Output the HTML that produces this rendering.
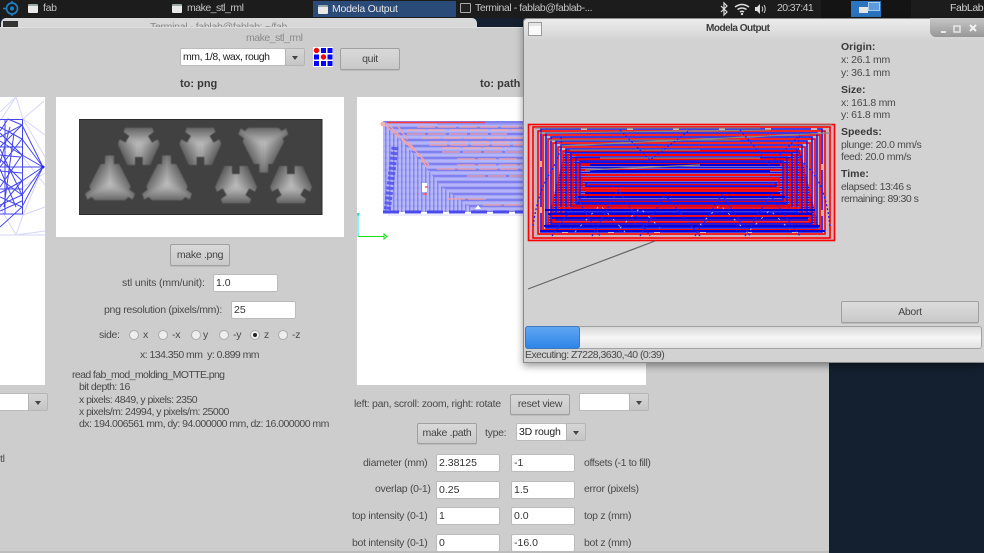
<!DOCTYPE html>
<html><head><meta charset="utf-8"><style>
*{box-sizing:border-box}
html,body{margin:0;padding:0;width:984px;height:553px;overflow:hidden;background:#14202f}
body{font-family:"Liberation Sans",sans-serif;font-size:10.5px;color:#4a4a4a;position:relative}
.a{position:absolute;white-space:pre;line-height:12px;letter-spacing:-.3px}
.t{letter-spacing:-.54px}
.box{position:absolute}
.btn{position:absolute;border:1px solid #a0a0a0;border-radius:2px;background:linear-gradient(#d9d9d9,#c9c9c9);text-align:center;color:#444;font-size:10.5px;letter-spacing:-.3px;box-shadow:0 1px 0 #bbb}
.inp{position:absolute;background:#fff;border:1px solid #bbb;border-radius:2px;padding-left:2px;color:#333;font-size:10.5px;line-height:16px;height:18px;width:64px}
.arr{position:absolute;background:linear-gradient(#d6d6d6,#c6c6c6);border:1px solid #b5b5b5;border-radius:0 2px 2px 0;height:18px;width:20px}
.arr:after{content:"";position:absolute;left:6px;top:7px;border:3.5px solid transparent;border-top:4px solid #444;border-bottom:0}
.rad{position:absolute;width:10px;height:10px;border-radius:50%;background:#eee;border:1px solid #aaa;top:330px}
.top{color:#c4c4c4;font-size:10.5px}
.b{font-weight:bold;color:#3a3a3a}
.wi{position:absolute;width:10px;height:9px;background:#e8e8e8;border-top:2px solid #9aa;border-radius:1px}
</style></head><body>
<!-- top bar -->
<div class="box" style="left:0;top:0;width:984px;height:18px;background:#1c1c1c"></div>
<svg class="box" style="left:2px;top:0" width="18" height="18"><circle cx="10" cy="8.500" r="5.500" fill="none" stroke="#1f7fc4" stroke-width="1.700"/><circle cx="10" cy="8.500" r="2" fill="#1f7fc4"/><path d="M1 8.500h3M10 1v2M10 14v2" stroke="#1f7fc4" stroke-width="1.500"/></svg>
<div class="wi" style="left:28px;top:4px"></div><div class="a top" style="left:43px;top:2px">fab</div>
<div class="wi" style="left:172px;top:4px"></div><div class="a top" style="left:187px;top:2px;letter-spacing:-.5px">make_stl_rml</div>
<div class="box" style="left:313px;top:1px;width:143px;height:16px;background:#2a4a78"></div>
<div class="wi" style="left:318px;top:5px"></div><div class="a" style="left:332px;top:3px;color:#e6e6e6;letter-spacing:-.25px">Modela Output</div>
<div class="box" style="left:460px;top:3px;width:11px;height:10px;background:#222;border:1px solid #aaa;border-radius:1px"></div>
<div class="a top" style="left:475px;top:2px;letter-spacing:-.43px">Terminal - fablab@fablab-...</div>
<svg class="box" style="left:719px;top:1px" width="60" height="16"><path d="M2 5l6 6-3 3V2l3 3-6 6" fill="none" stroke="#ddd" stroke-width="1.200"/><path d="M16 6q7-5 14 0M18.500 8.500q4.500-3 9 0M21 11q2-1.500 4 0" fill="none" stroke="#ddd" stroke-width="1.500"/><circle cx="23" cy="13" r="1.200" fill="#ddd"/><path d="M36 6h2l3-3v10l-3-3h-2z" fill="#ddd"/><path d="M43 5.500q1.500 2.500 0 5M45 4q2.500 4 0 8" fill="none" stroke="#ccc"/></svg>
<div class="a" style="left:777px;top:2px;color:#c8c8c8;letter-spacing:-.6px">20:37:41</div>
<div class="box" style="left:821px;top:0;width:90px;height:18px;background:#141414"></div>
<div class="box" style="left:851px;top:1px;width:30px;height:16px;background:#2b74c0"></div>
<div class="box" style="left:859px;top:7px;width:9px;height:6px;background:#e5e5e5"></div>
<div class="box" style="left:868px;top:2px;width:12px;height:9px;background:#5c9bdc;border:1px solid #a8c8ec"></div>
<div class="a top" style="left:950px;top:2px;color:#cfcfcf;letter-spacing:-.4px">FabLab</div>

<!-- behind window sliver -->
<div class="box" style="left:1px;top:18px;width:476px;height:12px;border-radius:5px 5px 0 0;background:#d8d8d8"></div>
<div class="box" style="left:3px;top:21px;width:15px;height:8px;background:#333"></div>
<div class="a" style="left:150px;top:21px;height:6px;overflow:hidden;color:#888">Terminal - fablab@fablab: ~/fab</div>

<!-- make_stl_rml window -->
<div class="box" style="left:0;top:27px;width:829px;height:526px;background:#cdcdcd;border-top:1px solid #e0e0e0"></div>
<div class="box" style="left:0;top:551px;width:829px;height:2px;background:#bcbcbc"></div>
<div class="a" style="left:246px;top:32px;color:#8a8a8a;letter-spacing:-.5px">make_stl_rml</div>

<div class="inp" style="left:180px;top:48px;width:106px;color:#222;line-height:17px;letter-spacing:-.45px">mm, 1/8, wax, rough</div><div class="arr" style="left:285px;top:48px"></div>
<svg class="box" style="left:313px;top:47px" width="20" height="20"><rect width="20" height="20" fill="#fff"/><g fill="#00f"><rect x="8" y="1" width="5" height="5"/><rect x="14.500" y="1" width="5" height="5"/><rect x="1" y="7.500" width="5" height="5"/><rect x="14.500" y="7.500" width="5" height="5"/><rect x="1" y="14" width="5" height="5"/><rect x="8" y="14" width="5" height="5"/><rect x="14.500" y="14" width="5" height="5"/></g><circle cx="3.500" cy="3.500" r="2.700" fill="#f00"/><circle cx="10.500" cy="10" r="2.700" fill="#f00"/></svg>
<div class="btn" style="left:340px;top:48px;width:60px;height:22px;line-height:20px">quit</div>
<div class="a b" style="left:180px;top:78px;font-size:11px;letter-spacing:0">to: png</div>
<div class="a b" style="left:480px;top:78px;font-size:11px;letter-spacing:0">to: path</div>

<!-- left mesh canvas -->
<svg class="box" style="left:0;top:97px" width="45" height="288"><rect width="45" height="288" fill="#fff"/>
<g stroke="#d5d5fb" stroke-width="1" fill="none"><path d="M0 24L16 0L23 22L44 4M23 22L45 38M23 22L45 60M43 70L23 118L16 138L0 110M23 118L45 110M16 138L45 134M23 60L45 88M23 90L45 76M16 0L0 15M0 138H45"/></g>
<g stroke="#4545f2" stroke-width="1" fill="none"><path d="M0 22.500H22.500V117H0"/><path d="M43 70L22 28L0 40M43 70L22 42L0 70M43 70L22 58L0 90M43 70H0M43 70L22 84L0 62M43 70L22 98L0 52M43 70L22 110L0 130M22 28L8 22L0 34M22 42L0 30M22 58L0 44M22 84L0 96M22 98L0 82M22 110L0 100M5 22V117M22 28L0 50M22 58L0 36M22 84L0 110M22 98L0 108M14 36L4 110M22 50H0M22 76L0 74M22 92L0 92M22 104L0 114M10 30L0 66M16 110L0 72M20 60L0 58"/></g><circle cx="43" cy="70" r="1.500" fill="#22f"/></svg>
<!-- left combo -->
<div class="inp" style="left:-30px;top:393px;height:18px;width:60px"></div><div class="arr" style="left:28px;top:393px"></div>
<div class="a" style="left:0;top:453px">tl</div>

<!-- png preview -->
<div class="box" style="left:56px;top:97px;width:288px;height:140px;background:#fff"></div>
<svg class="box" style="left:79px;top:119px" width="244" height="96" viewBox="79 119 244 96"><defs>
<filter id="sf" x="-5%" y="-5%" width="110%" height="110%"><feGaussianBlur stdDeviation=".45"/></filter>
<linearGradient id="g1" gradientUnits="userSpaceOnUse" x1="0" y1="-55" x2="0" y2="-5"><stop offset="0" stop-color="#636363"/><stop offset="1" stop-color="#c0c0c0"/></linearGradient>
<linearGradient id="g2" gradientUnits="userSpaceOnUse" x1="52" y1="25" x2="0" y2="-5"><stop offset="0" stop-color="#5c5c5c"/><stop offset="1" stop-color="#c0c0c0"/></linearGradient>
<linearGradient id="g3" gradientUnits="userSpaceOnUse" x1="-52" y1="25" x2="0" y2="-5"><stop offset="0" stop-color="#5c5c5c"/><stop offset="1" stop-color="#c0c0c0"/></linearGradient>
<clipPath id="ca"><path d="M-41-55H41L45-42L28-30L40-10L57-20L63-6L35 57H12V33H-11V57H-35L-63-6L-57-20L-40-10L-28-30L-45-42Z"/></clipPath>
<clipPath id="cb"><path d="M-45-52H45L55-42L68-50L75-32L58-20L62-10L28 57H15V83H-12V57H-28L-62-10L-58-20L-75-32L-68-50L-55-42Z"/></clipPath>
<g id="sec"><path d="M0-5L-100-62V-90H100V-62Z" fill="url(#g1)"/><path d="M0-5L100-62V100H0Z" fill="url(#g2)"/><path d="M0-5L-100-62V100H0Z" fill="url(#g3)"/></g>
<g id="A" clip-path="url(#ca)"><use href="#sec"/></g>
<g id="B" clip-path="url(#cb)"><use href="#sec"/></g>
</defs>
<rect x="79" y="119.500" width="243" height="95" fill="#414141" stroke="#2c2c2c"/>
<g filter="url(#sf)">
<use href="#A" transform="translate(138.700,146) scale(.333)"/>
<use href="#A" transform="translate(200.300,146) scale(.333)"/>
<use href="#B" transform="translate(263.300,145) scale(.333)"/>
<use href="#B" transform="translate(110,183) rotate(180) scale(.333)"/>
<use href="#B" transform="translate(167,183) rotate(180) scale(.333)"/>
<use href="#A" transform="translate(236,185) rotate(180) scale(.333)"/>
<use href="#A" transform="translate(291,185) rotate(180) scale(.333)"/>
</g>
</svg>
<div class="btn" style="left:170px;top:244px;width:60px;height:22px;line-height:20px">make .png</div>
<div class="a" style="left:122px;top:277px;letter-spacing:-.15px">stl units (mm/unit):</div><div class="inp" style="left:213px;top:274px;width:65px">1.0</div>
<div class="a" style="left:104px;top:304px">png resolution (pixels/mm):</div><div class="inp" style="left:231px;top:301px;width:65px">25</div>
<div class="a" style="left:99px;top:329px">side:</div>
<div class="rad" style="left:129px"></div><div class="a" style="left:143px;top:329px">x</div>
<div class="rad" style="left:158px"></div><div class="a" style="left:172px;top:329px">-x</div>
<div class="rad" style="left:191px"></div><div class="a" style="left:203px;top:329px">y</div>
<div class="rad" style="left:219px"></div><div class="a" style="left:233px;top:329px">-y</div>
<div class="rad" style="left:250px"></div><div class="box" style="left:253px;top:333px;width:4px;height:4px;border-radius:50%;background:#222"></div><div class="a" style="left:264px;top:329px">z</div>
<div class="rad" style="left:278px"></div><div class="a" style="left:292px;top:329px">-z</div>
<div class="a t" style="left:140px;top:349px">x: 134.350 mm  y: 0.899 mm</div>
<div class="a t" style="left:72px;top:369px;letter-spacing:-.6px">read fab_mod_molding_MOTTE.png</div>
<div class="a t" style="left:79px;top:381px">bit depth: 16</div>
<div class="a t" style="left:79px;top:393.500px">x pixels: 4849, y pixels: 2350</div>
<div class="a t" style="left:79px;top:405.500px">x pixels/m: 24994, y pixels/m: 25000</div>
<div class="a t" style="left:79px;top:418px">dx: 194.006561 mm, dy: 94.000000 mm, dz: 16.000000 mm</div>

<!-- path canvas -->
<div class="box" style="left:357px;top:97px;width:289px;height:288px;background:#fff"></div>
<svg class="box" style="left:357px;top:97px" width="170" height="150">
<defs><pattern id="st" width="12" height="6" patternUnits="userSpaceOnUse"><rect width="12" height="6" fill="#a4a4f5"/><rect y="0" width="12" height="2" fill="#8080f0"/><rect y="3.500" width="12" height="1" fill="#c5c5fa"/></pattern>
<pattern id="vs" width="4" height="6" patternUnits="userSpaceOnUse"><rect width="4" height="6" fill="#b9b9f8"/><rect width="1.500" height="6" fill="#8080ee"/></pattern></defs>
<path d="M26 24H170V115H26Z" fill="url(#st)"/>
<path d="M26 25L65 66L85 90L120 115H26Z" fill="url(#vs)" opacity=".85"/>
<path d="M38 50L30 115" stroke="#5050ee" stroke-width="7" stroke-dasharray="3 2" fill="none" opacity=".85"/>
<path d="M26 115H170" stroke="#4a4aee" stroke-width="3" stroke-dasharray="16 6"/>
<g stroke="#f4a2a2" fill="none" stroke-width="1.300"><path d="M28 28L65 60M30 26L72 68M40 28L70 70M60 30H170M50 33H170M65 41H170M50 37H150M72 45H170M72 48H170M85 55H170M85 51H150M100 62H160M80 72H170M110 79H170M90 102H130M126 108H170M100 68H170" stroke-dasharray="18 3"/></g>
<path d="M30 25.500H128" stroke="#ff3a3a" stroke-width="1.500"/><path d="M80 27H170" stroke="#9090f2" stroke-width="1.500"/>
<path d="M31 118H170" stroke="#d8d8fa"/>
<path d="M118 112l3-4 3 4zM65 86h5v9h-5z" fill="#fff"/><path d="M66 97h4M68 90h3" stroke="#f55" stroke-width="1.500"/>
<circle cx="26" cy="27" r="2.500" fill="#f4b0b0"/>
<path d="M1 118V139.500" stroke="#19e6e6"/><path d="M1 139.500H27" stroke="#18e018"/><path d="M27 137v5l3-2.500z" fill="none" stroke="#18e018"/><rect x="0" y="116" width="2.500" height="2.500" fill="#19e6e6"/>
</svg>
<div class="a" style="left:354px;top:398px">left: pan, scroll: zoom, right: rotate</div>
<div class="btn" style="left:510px;top:394px;width:60px;height:21px;line-height:19px">reset view</div>
<div class="inp" style="left:579px;top:393px;width:51px"></div><div class="arr" style="left:629px;top:393px"></div>
<div class="btn" style="left:417px;top:423px;width:60px;height:21px;line-height:19px">make .path</div>
<div class="a" style="left:485px;top:427px">type:</div>
<div class="inp" style="left:516px;top:423px;width:51px;color:#222;letter-spacing:-.2px">3D rough</div><div class="arr" style="left:566px;top:423px"></div>

<div class="a" style="left:363px;top:457px">diameter (mm)</div><div class="inp" style="left:436px;top:454px">2.38125</div><div class="inp" style="left:511px;top:454px">-1</div><div class="a" style="left:584px;top:457px;letter-spacing:-.4px">offsets (-1 to fill)</div>
<div class="a" style="left:375px;top:483px">overlap (0-1)</div><div class="inp" style="left:436px;top:481px">0.25</div><div class="inp" style="left:511px;top:481px">1.5</div><div class="a" style="left:584px;top:483px">error (pixels)</div>
<div class="a" style="left:352px;top:510px">top intensity (0-1)</div><div class="inp" style="left:436px;top:507px">1</div><div class="inp" style="left:511px;top:507px">0.0</div><div class="a" style="left:584px;top:510px">top z (mm)</div>
<div class="a" style="left:352px;top:537px">bot intensity (0-1)</div><div class="inp" style="left:436px;top:534px">0</div><div class="inp" style="left:511px;top:534px">-16.0</div><div class="a" style="left:584px;top:537px">bot z (mm)</div>

<!-- Modela window -->
<div class="box" style="left:523px;top:18px;width:461px;height:345px;background:#d2d2d2;border:1px solid #8a8a8a;border-right:0;border-radius:4px 4px 0 0;box-shadow:0 3px 8px rgba(0,0,0,.4)"></div>
<div class="box" style="left:524px;top:19px;width:460px;height:22px;border-radius:4px 0 0 0;background:linear-gradient(#ececec,#d2d2d2)"></div>
<div class="box" style="left:528px;top:22px;width:14px;height:14px;background:linear-gradient(#e4e4e4 0 3px,#fafafa 3px);border:1px solid #9a9a9a"></div>
<div class="a" style="left:706px;top:23px;font-weight:bold;font-size:10px;color:#3c3c3c;letter-spacing:-.5px">Modela Output</div>
<div class="box" style="left:930px;top:18px;width:54px;height:19px;border-radius:0 0 0 6px;background:linear-gradient(#c6c6c6,#979797)"></div>
<svg class="box" style="left:930px;top:18px" width="54" height="19"><path d="M11 14h5" stroke="#e8e8e8" stroke-width="2"/><rect x="24" y="8" width="6" height="6" fill="none" stroke="#e8e8e8" stroke-width="1.500"/><path d="M40 7l6 6M46 7l-6 6" stroke="#f2f2f2" stroke-width="2"/></svg>

<svg class="box" style="left:527px;top:123px" width="310" height="168" viewBox="527 123 310 168">
<defs><pattern id="hs" width="5" height="5" patternUnits="userSpaceOnUse" y="124"><rect width="5" height="5" fill="#d9b8c4"/><rect width="5" height="2" fill="#e00"/><rect y="2.500" width="5" height="2" fill="#1414e0"/></pattern></defs>
<rect x="528" y="124" width="307" height="117" fill="#cdb4bc"/>
<path d="M565 150H800L820 232H545Z" fill="url(#hs)"/>
<g fill="none" stroke-width="1.600">
<g stroke="#f00"><rect x="528.500" y="124.500" width="306" height="116"/><rect x="533" y="127" width="297" height="111"/><rect x="538" y="131" width="287" height="103"/><rect x="543" y="135" width="277" height="95"/><rect x="548" y="139" width="267" height="87"/><rect x="553" y="143" width="257" height="79"/><rect x="558" y="147" width="247" height="71"/><rect x="563" y="151" width="237" height="63"/><rect x="568" y="155" width="227" height="55"/><rect x="573" y="159" width="217" height="47"/><rect x="578" y="164" width="207" height="37"/><rect x="582" y="178" width="197" height="10"/></g>
<g stroke="#1a1ae8"><rect x="541" y="129" width="281" height="103" stroke-dasharray="40 6"/><rect x="546" y="133" width="271" height="95"/><rect x="551" y="137" width="261" height="87"/><rect x="556" y="141" width="251" height="79"/><rect x="561" y="145" width="241" height="71"/><rect x="566" y="149" width="231" height="63"/><rect x="571" y="153" width="221" height="55"/><rect x="576" y="157" width="211" height="47"/><rect x="580" y="161" width="203" height="39"/><rect x="586" y="183" width="190" height="3"/></g>
<g stroke="#00d" stroke-width="2"><path d="M590 165H780M590 171H770M545 210H815M548 214H812M552 218H808M544 226H820M540 231H825M585 193H780M578 197H785"/></g>
<g stroke="#ff1010" stroke-width="1.800"><path d="M586 175H770M586 191H778M560 208H800M553 216H810"/></g>
<g stroke="#888" stroke-width="1.200"><path d="M535 128H760M760 125H832M540 133L770 130M550 140H740M570 150H700M600 158H760M560 146L830 133M585 170L700 165"/></g>
<g stroke="#2020f0" stroke-width="1.300" stroke-dasharray="2 2"><path d="M533 226Q538 190 552 170Q565 145 560 135M552 236L578 200L600 236M592 236L618 190L650 236M640 236L665 195L700 236M695 236L722 195L750 236M745 236L770 195L800 236M830 226Q825 180 805 165Q795 150 800 135M620 130L650 160L690 130M740 130L770 165L800 135"/></g>
<g stroke="#fff" stroke-width="1" stroke-dasharray="2 6" opacity=".7"><path d="M575 232L600 205L625 232M620 228L640 208L660 228M700 225L720 205L745 230M750 230L770 210L790 230"/></g>
</g>
<path d="M528 289L655 241" stroke="#666" stroke-width="1.200" fill="none"/>
</svg>

<div class="a b" style="left:841px;top:41px;letter-spacing:0">Origin:</div>
<div class="a" style="left:841px;top:54px">x: 26.1 mm</div>
<div class="a" style="left:841px;top:66.500px">y: 36.1 mm</div>
<div class="a b" style="left:841px;top:84px;letter-spacing:0">Size:</div>
<div class="a" style="left:841px;top:97px">x: 161.8 mm</div>
<div class="a" style="left:841px;top:109px">y: 61.8 mm</div>
<div class="a b" style="left:841px;top:126px;letter-spacing:0">Speeds:</div>
<div class="a" style="left:841px;top:139px;letter-spacing:-.35px">plunge: 20.0 mm/s</div>
<div class="a" style="left:841px;top:151px;letter-spacing:-.35px">feed: 20.0 mm/s</div>
<div class="a b" style="left:841px;top:168px;letter-spacing:0">Time:</div>
<div class="a" style="left:841px;top:181px;letter-spacing:-.45px">elapsed: 13:46 s</div>
<div class="a" style="left:841px;top:193px;letter-spacing:-.5px">remaining: 89:30 s</div>
<div class="btn" style="left:841px;top:301px;width:138px;height:22px;line-height:20px;background:linear-gradient(#dcdcdc,#c9c9c9)">Abort</div>
<div class="box" style="left:525px;top:326px;width:457px;height:23px;border:1px solid #a2a2a2;border-radius:3px;background:linear-gradient(#d8d8d8,#f6f6f6 50%,#e2e2e2)"></div>
<div class="box" style="left:525px;top:326px;width:55px;height:23px;border:1px solid #3f78bd;border-radius:3px;background:linear-gradient(#5ea7f3,#2f84e6)"></div>
<div class="a t" style="left:525px;top:349px">Executing: Z7228,3630,-40 (0:39)</div>
</body></html>
